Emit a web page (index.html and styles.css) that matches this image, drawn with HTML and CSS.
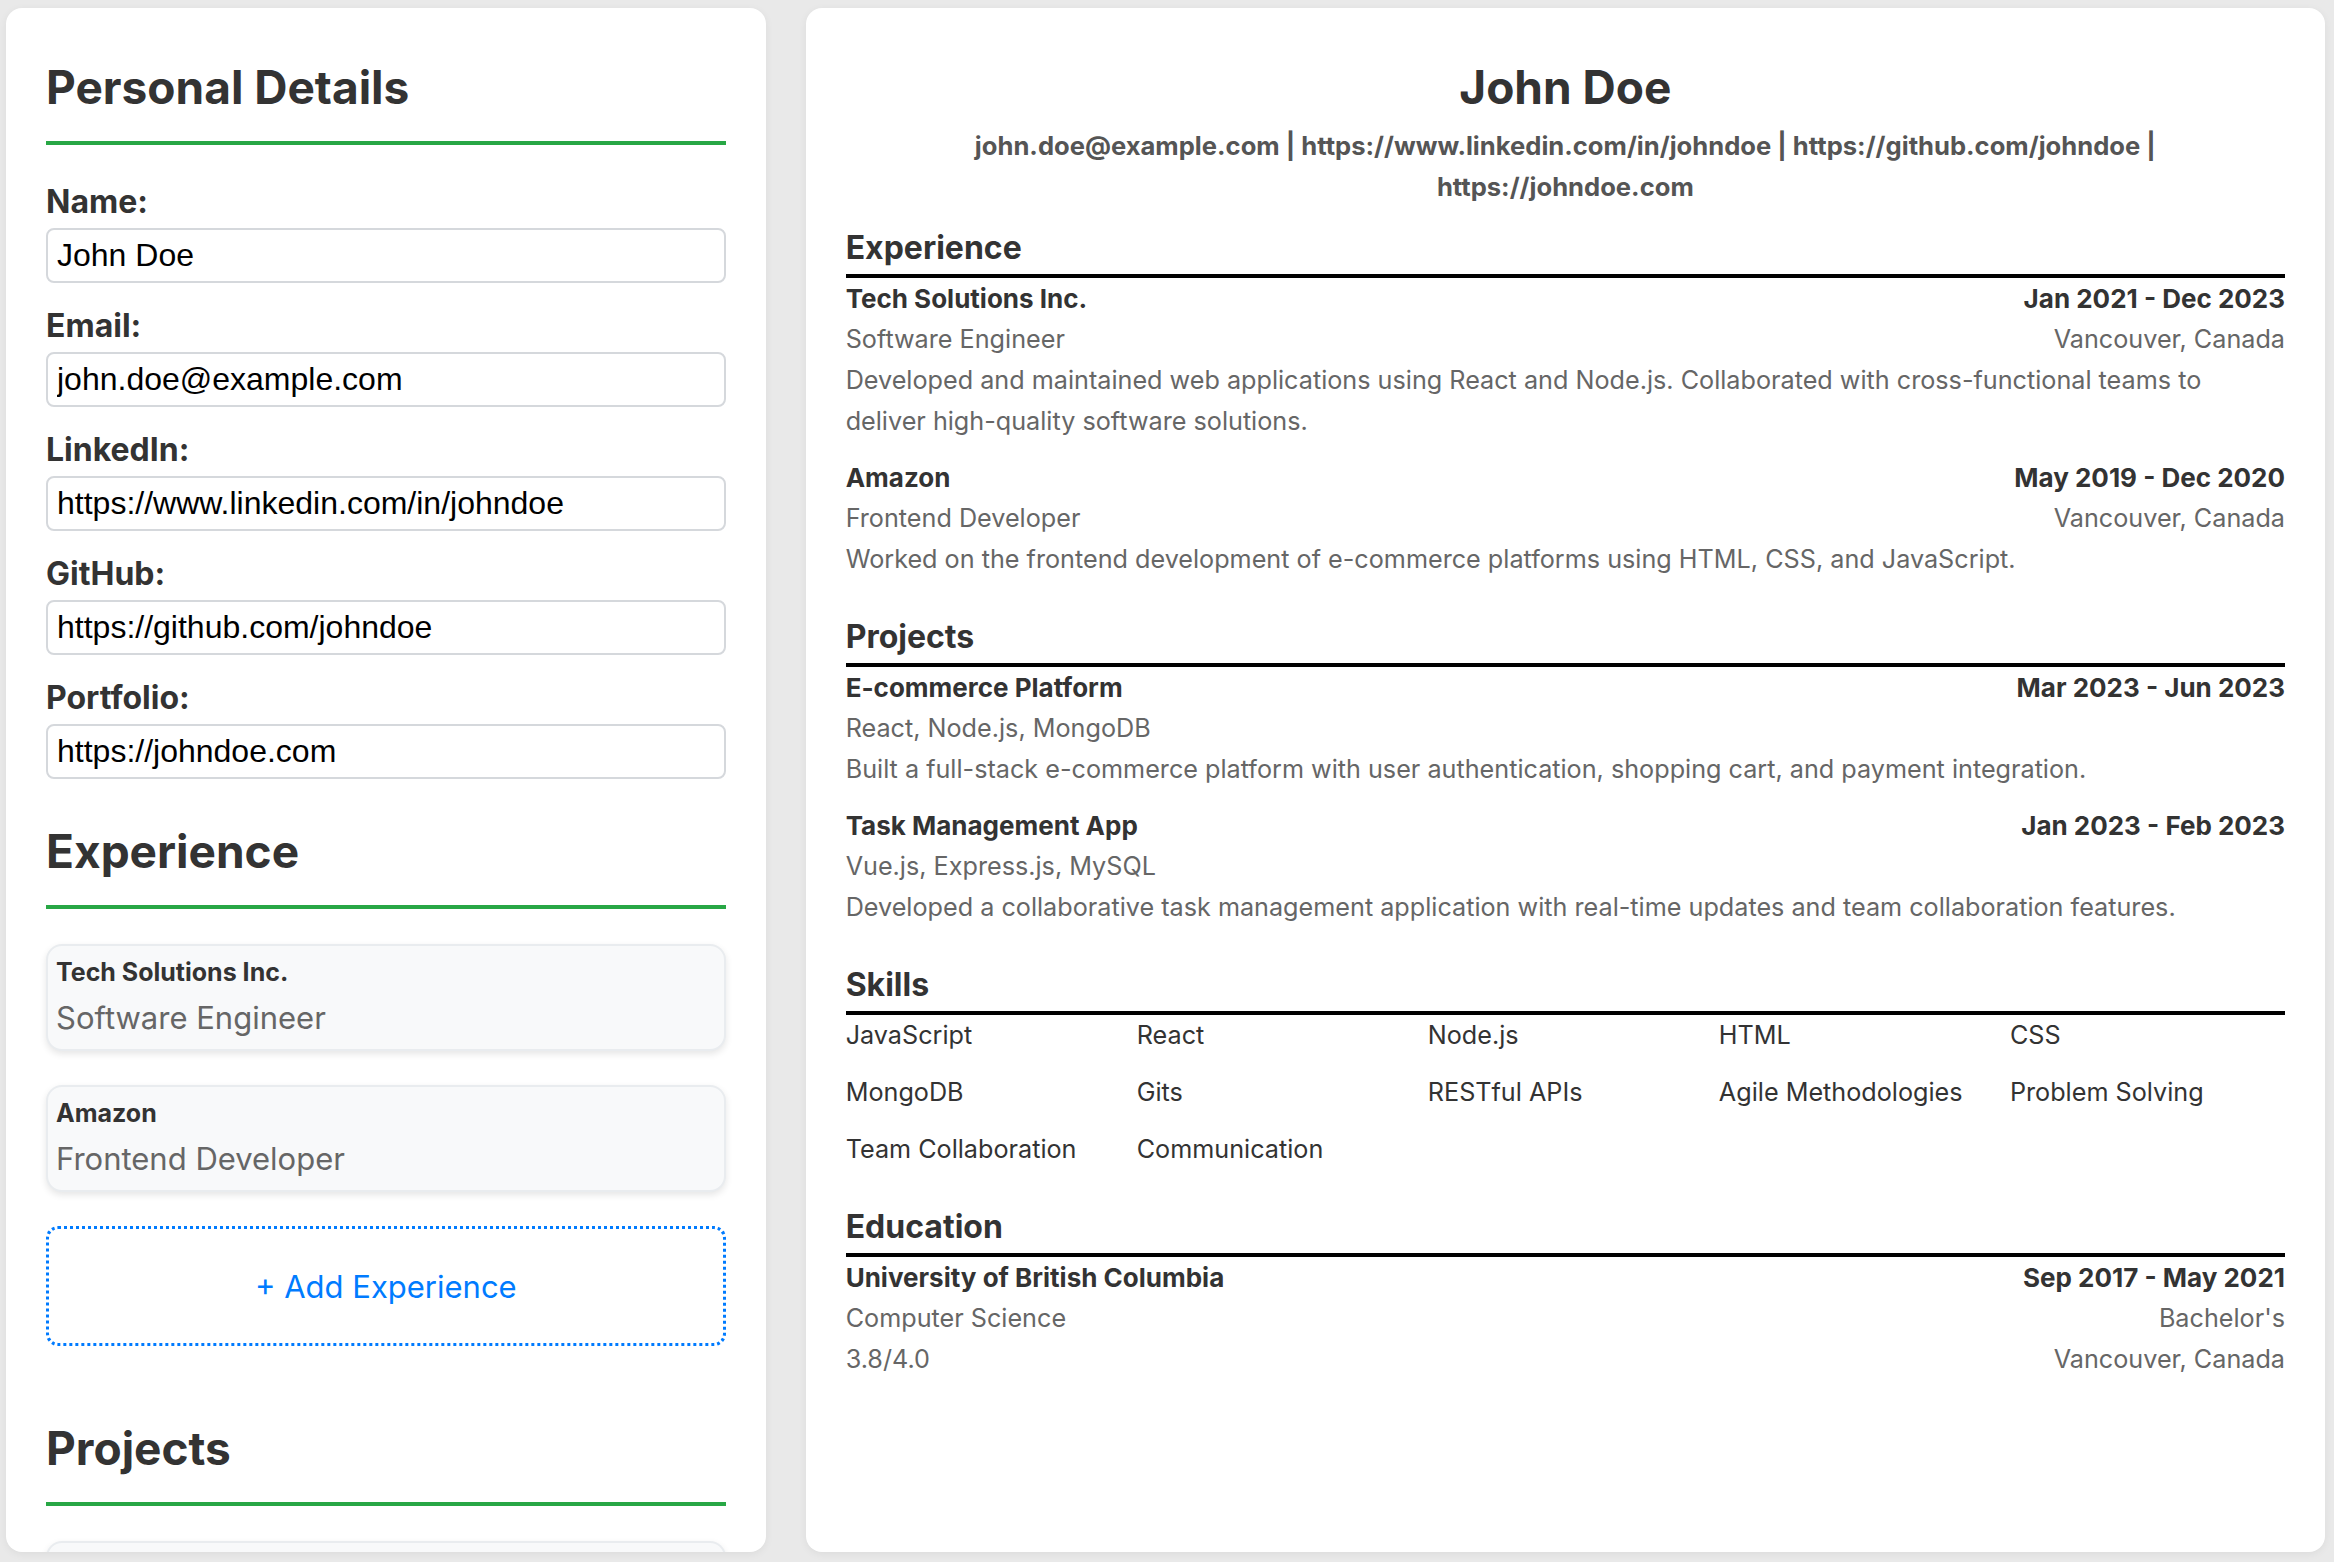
FILE: index.html
```html
<!DOCTYPE html>
<html lang="en">
<head>
<meta charset="utf-8">
<title>Resume Builder</title>
<link rel="stylesheet" href="styles.css">
</head>
<body>
<div class="app">
  <aside class="editor">
    <section class="form-section">
      <h2 class="form-title">Personal Details</h2>
      <div class="fields">
        <div class="field"><label class="field-label">Name:</label><input class="field-input" type="text" value="John Doe"></div>
        <div class="field"><label class="field-label">Email:</label><input class="field-input" type="text" value="john.doe@example.com"></div>
        <div class="field"><label class="field-label">LinkedIn:</label><input class="field-input" type="text" value="https://www.linkedin.com/in/johndoe"></div>
        <div class="field"><label class="field-label">GitHub:</label><input class="field-input" type="text" value="https://github.com/johndoe"></div>
        <div class="field"><label class="field-label">Portfolio:</label><input class="field-input" type="text" value="https://johndoe.com"></div>
      </div>
    </section>
    <section class="form-section">
      <h2 class="form-title">Experience</h2>
      <div class="entry-card">
        <div class="card-title">Tech Solutions Inc.</div>
        <div class="card-sub">Software Engineer</div>
      </div>
      <div class="entry-card">
        <div class="card-title">Amazon</div>
        <div class="card-sub">Frontend Developer</div>
      </div>
      <button class="add-btn" type="button">+ Add Experience</button>
    </section>
    <section class="form-section">
      <h2 class="form-title">Projects</h2>
      <div class="entry-card">
        <div class="card-title">E-commerce Platform</div>
        <div class="card-sub">React, Node.js, MongoDB</div>
      </div>
      <div class="entry-card">
        <div class="card-title">Task Management App</div>
        <div class="card-sub">Vue.js, Express.js, MySQL</div>
      </div>
    </section>
  </aside>

  <main class="preview">
    <header class="cv-header">
      <h1 class="cv-name">John Doe</h1>
      <p class="cv-contact">john.doe@example.com | https://www.linkedin.com/in/johndoe | https://github.com/johndoe |<br>https://johndoe.com</p>
    </header>

    <section class="cv-section">
      <h3 class="cv-title">Experience</h3>
      <div class="cv-entry">
        <div class="cv-row"><span class="strong">Tech Solutions Inc.</span><span class="strong">Jan 2021 - Dec 2023</span></div>
        <div class="cv-row muted"><span>Software Engineer</span><span>Vancouver, Canada</span></div>
        <p class="cv-desc">Developed and maintained web applications using React and Node.js. Collaborated with cross-functional teams to deliver high-quality software solutions.</p>
      </div>
      <div class="cv-entry">
        <div class="cv-row"><span class="strong">Amazon</span><span class="strong">May 2019 - Dec 2020</span></div>
        <div class="cv-row muted"><span>Frontend Developer</span><span>Vancouver, Canada</span></div>
        <p class="cv-desc">Worked on the frontend development of e-commerce platforms using HTML, CSS, and JavaScript.</p>
      </div>
    </section>

    <section class="cv-section">
      <h3 class="cv-title">Projects</h3>
      <div class="cv-entry">
        <div class="cv-row"><span class="strong">E-commerce Platform</span><span class="strong">Mar 2023 - Jun 2023</span></div>
        <div class="cv-row muted"><span>React, Node.js, MongoDB</span></div>
        <p class="cv-desc">Built a full-stack e-commerce platform with user authentication, shopping cart, and payment integration.</p>
      </div>
      <div class="cv-entry">
        <div class="cv-row"><span class="strong">Task Management App</span><span class="strong">Jan 2023 - Feb 2023</span></div>
        <div class="cv-row muted"><span>Vue.js, Express.js, MySQL</span></div>
        <p class="cv-desc">Developed a collaborative task management application with real-time updates and team collaboration features.</p>
      </div>
    </section>

    <section class="cv-section">
      <h3 class="cv-title">Skills</h3>
      <ul class="skills">
        <li>JavaScript</li><li>React</li><li>Node.js</li><li>HTML</li><li>CSS</li>
        <li>MongoDB</li><li>Gits</li><li>RESTful APIs</li><li>Agile Methodologies</li><li>Problem Solving</li>
        <li>Team Collaboration</li><li>Communication</li>
      </ul>
    </section>

    <section class="cv-section">
      <h3 class="cv-title">Education</h3>
      <div class="cv-entry">
        <div class="cv-row"><span class="strong">University of British Columbia</span><span class="strong">Sep 2017 - May 2021</span></div>
        <div class="cv-row muted"><span>Computer Science</span><span>Bachelor's</span></div>
        <div class="cv-row muted"><span>3.8/4.0</span><span>Vancouver, Canada</span></div>
      </div>
    </section>
  </main>
</div>
</body>
</html>
```

FILE: styles.css
```css
* {
  box-sizing: border-box;
}

html, body {
  margin: 0;
  padding: 0;
  height: 100%;
}

body {
  background: #e9e9e9;
  font-family: "Inter", "Noto Sans", sans-serif;
  color: #333;
}

.app {
  display: grid;
  grid-template-columns: 1fr 2fr;
  column-gap: 40px;
  height: 100vh;
  padding: 8px 9px 10px 6px;
}

/* ---------- Editor (left) ---------- */
.editor {
  min-width: 0;
  background: #fff;
  border-radius: 16px;
  box-shadow: 0 2px 8px rgba(0, 0, 0, 0.06);
  padding: 50px 40px;
  overflow: hidden;
}

.form-section {
  display: flow-root;
  margin-bottom: 19px;
}

.form-title {
  margin: 0 0 35px;
  font-size: 46px;
  line-height: 58px;
  font-weight: 700;
  color: #333;
  padding-bottom: 25px;
  border-bottom: 4px solid #28a745;
}

.fields {
  padding-top: 3px;
}

.field {
  margin-bottom: 24px;
}

.field-label {
  display: block;
  font-size: 32px;
  line-height: 38px;
  font-weight: 700;
  color: #333;
  margin-bottom: 7px;
}

.field-input {
  display: block;
  width: 100%;
  height: 55px;
  margin: 0;
  padding: 0 9px;
  font-family: "Liberation Sans", Arial, sans-serif;
  font-size: 32px;
  color: #000;
  background: #fff;
  border: 2px solid #d5d8dc;
  border-radius: 8px;
  outline: none;
}

.entry-card {
  height: 107px;
  margin-bottom: 34px;
  padding: 11px 8px 12px;
  background: #f8f9fa;
  border: 2px solid #e9ecef;
  border-radius: 16px;
  box-shadow: 0 3px 7px rgba(0, 0, 0, 0.1);
}

.card-title {
  font-size: 25px;
  line-height: 31px;
  font-weight: 700;
  color: #333;
  margin-bottom: 10px;
}

.card-sub {
  font-size: 31px;
  line-height: 39px;
  color: #666;
}

.add-btn {
  display: flex;
  align-items: center;
  justify-content: center;
  width: 100%;
  height: 120px;
  margin: 0 0 54px;
  padding: 0;
  background: #fff;
  border: 3px dotted #007bff;
  border-radius: 12px;
  font-family: "Inter", "Noto Sans", sans-serif;
  font-size: 31px;
  color: #007bff;
  cursor: pointer;
}

/* ---------- Preview (right) ---------- */
.preview {
  min-width: 0;
  background: #fff;
  border-radius: 16px;
  box-shadow: 0 2px 8px rgba(0, 0, 0, 0.06);
  padding: 51px 40px;
  overflow: hidden;
}

.cv-header {
  text-align: center;
  margin-bottom: 21px;
}

.cv-name {
  margin: 0;
  font-size: 46px;
  line-height: 56px;
  font-weight: 700;
  color: #333;
}

.cv-contact {
  margin: 10px 0 0;
  font-size: 25.6px;
  line-height: 41px;
  font-weight: 700;
  color: #555;
}

.cv-section {
  display: flow-root;
  margin-bottom: 22px;
}

.cv-title {
  margin: 0;
  font-size: 32px;
  line-height: 40px;
  font-weight: 700;
  color: #333;
  padding-bottom: 6px;
  border-bottom: 4px solid #000;
}

.cv-entry {
  margin-bottom: 15px;
  font-size: 25.2px;
  line-height: 41px;
}

.cv-row {
  display: flex;
  justify-content: space-between;
  gap: 20px;
}

.strong {
  font-size: 26px;
  font-weight: 700;
  color: #333;
}

.muted {
  color: #666;
}

.cv-desc {
  margin: 0;
  padding-right: 20px;
  color: #666;
}

.skills {
  list-style: none;
  margin: 0 0 15px;
  padding: 0;
  display: grid;
  grid-template-columns: repeat(5, 1fr);
  gap: 16px;
  font-size: 25.2px;
  line-height: 41px;
  color: #333;
}
```
